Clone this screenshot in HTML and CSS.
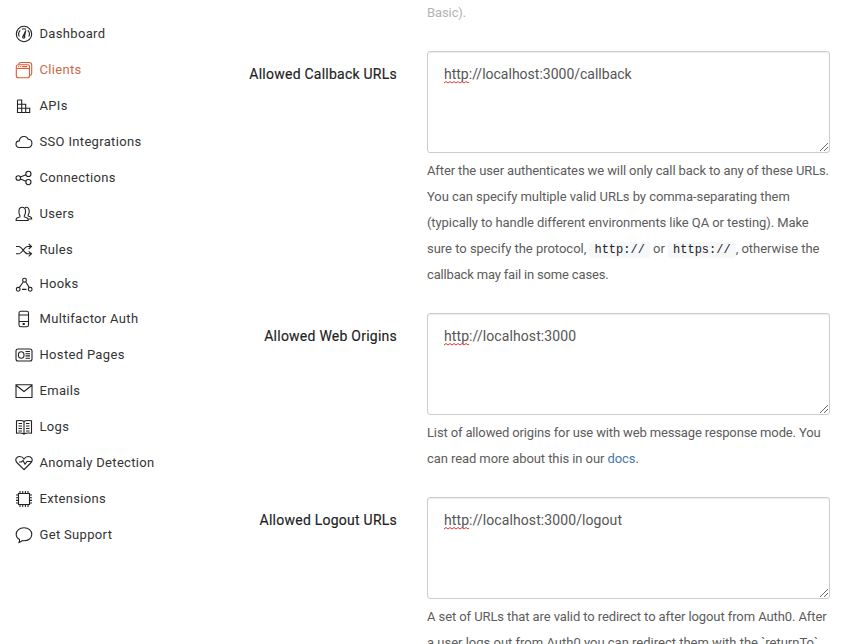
FILE: index.html
```html
<!DOCTYPE html>
<html lang="en">
<head>
<meta charset="utf-8">
<title>Client settings</title>
<link rel="stylesheet" href="styles.css">
</head>
<body>
<div class="page">
<nav class="sidebar">
<a class="item"><svg viewBox="0 0 18 18"><circle cx="9" cy="9" r="7.7"/><path d="M4.300 11.500a5.200 5.200 0 0 1 1-6.200M7 4.200a5 5 0 0 1 4 0M12.800 5.400a5.200 5.200 0 0 1 1 6.100M8.200 11 10.800 5.400 9.500 11.300"/><circle cx="8.7" cy="12" r="1.1"/></svg><span>Dashboard</span></a>
<a class="item active"><svg viewBox="0 0 18 18"><rect x="1.3" y="3.7" width="13.2" height="13" rx="2"/><path d="M1.500 7.500h13M3.200 5.600h1M5.200 5.600h1M7.200 5.600h5M3.600 3.500Q3.800 1.500 6 1.500h8.200q2.500 0 2.500 2.500v8.500q0 1.800-2 2"/></svg><span>Clients</span></a>
<a class="item"><svg viewBox="0 0 18 18"><path d="M2.500 3v12.500h12.200v-4.200H2.500M2.500 3h4.200v12.500M2.500 7.200h8.200v8.300"/></svg><span>APIs</span></a>
<a class="item"><svg viewBox="0 0 18 18"><path d="M4.500 14.500C2.200 14.500 1 13 1 11.200 1 9.200 2.300 8 4.300 7.900 4.600 5.200 6.500 3.500 9 3.500c2.200 0 3.500 1 4.200 2.800 2.200 0 3.700 1.700 3.700 4 0 2.500-1.600 4.200-4 4.200Z"/></svg><span>SSO Integrations</span></a>
<a class="item"><svg viewBox="0 0 18 18"><circle cx="3.3" cy="9" r="2.3"/><circle cx="13.4" cy="4.9" r="2.6"/><circle cx="13.4" cy="13.1" r="2.6"/><path d="M5.400 8.100 11 5.800M5.400 9.900 11 12.200"/></svg><span>Connections</span></a>
<a class="item"><svg viewBox="0 0 18 18"><path d="M1.100 15.500q-.2-2 1-2.500l2.800-1.100q.5-.7-.3-1.700Q3.700 8.500 4 5.500 4.300 2.300 7.200 2.300T10.500 5.500q.2 3-.8 4.700-.8 1-.3 1.700l2.800 1.100q1.200.5 1 2.500ZM10 2.500q3.500-1.200 4.200 3 .2 3-.8 4-.7.8-.1 1.600l2.300.9q1.300.5 1.100 2h-3"/></svg><span>Users</span></a>
<a class="item"><svg viewBox="0 0 18 18"><path d="M1 5.500h2.500C7.500 5.500 9 12.800 12.500 12.800H16M1 12.800h2.500C7.500 12.800 9 5.500 12.500 5.500H16M13.700 3l2.800 2.500L13.700 8M13.700 10.300l2.800 2.500-2.800 2.500"/></svg><span>Rules</span></a>
<a class="item hooks"><svg viewBox="0 0 18 18"><circle cx="9.500" cy="4.2" r="1.9"/><circle cx="3.2" cy="13.3" r="1.9"/><circle cx="15.2" cy="13.3" r="1.9"/><path d="m8.200 6-3.800 5.400M10.800 6l3.400 5.400M7 13.400h4.500"/></svg><span>Hooks</span></a>
<a class="item multi"><svg viewBox="0 0 18 18"><rect x="4" y="1.3" width="9.5" height="15.4" rx="1.8"/><path d="M4 5h9.500M4 11.500h9.500M8.200 13.500h1v1h-1z"/></svg><span>Multifactor Auth</span></a>
<a class="item"><svg viewBox="0 0 18 18"><rect x="1" y="3" width="16" height="12" rx="2"/><ellipse cx="6.2" cy="9" rx="2.8" ry="3.2"/><path d="M10.500 5.500H15M10.500 7.700H15M10.500 9.900H15M10.500 12.300H15"/></svg><span>Hosted Pages</span></a>
<a class="item"><svg viewBox="0 0 18 18"><path d="M1 2.800h16v12.700h-16ZM1 3.200 9 9.500l8-6.300"/></svg><span>Emails</span></a>
<a class="item"><svg viewBox="0 0 18 18"><path d="M9 3.500Q7.500 2 1.500 2.700v12.500q6-.5 7.500 1 1.500-1.500 7.500-1V2.700Q10.500 2 9 3.500v12.700M3.500 5.500H7M3.500 8H7M3.500 10.500H7M3.500 13H7M11 5.500h3.500M11 8h3.500M11 10.500h3.500M11 13h3.500"/></svg><span>Logs</span></a>
<a class="item"><svg viewBox="0 0 18 18"><path d="M9 15.700 2.300 9C-.8 5.800 1.500 2.500 4.700 2.500 6.700 2.500 8 3.500 9 5c1-1.500 2.300-2.500 4.300-2.500 3.200 0 5.500 3.300 2.400 6.500ZM4 8h2.500L8 6.500l2 3.800L12 7.500h4.500"/></svg><span>Anomaly Detection</span></a>
<a class="item"><svg viewBox="0 0 18 18"><path d="M3.500 3.500h11v11h-11ZM5 3.500V1M7.700 3.500V1M10.400 3.500V1M13 3.500V1M5 17v-2.500M7.700 17v-2.500M10.400 17v-2.500M13 17v-2.500M1 5h2.500M1 7.700h2.500M1 10.400h2.500M1 13h2.500M14.500 5H17M14.500 7.700H17M14.500 10.400H17M14.500 13H17"/></svg><span>Extensions</span></a>
<a class="item"><svg viewBox="0 0 18 18"><path d="M4.500 13.500C2.500 12.500 1.200 10.500 1.200 8.300 1.200 4.500 4.500 1.700 9 1.700s7.800 2.800 7.800 6.600-3.300 6.500-7.800 6.500q-1 0-1.800-.2Q5.800 16 4 16.500q.8-1.500.5-3Z"/></svg><span>Get Support</span></a>
</nav>
<main class="form">
<p class="help faded">Basic).</p>
<section class="row">
<label class="label callback">Allowed Callback URLs</label>
<div class="field">
<div class="area"><span class="misspelled">http<svg class="squiggle" viewBox="0 0 26 3"><path d="m0 2 2-1.500 2 1.500 2-1.500 2 1.500 2-1.500 2 1.500 2-1.500 2 1.500 2-1.500 2 1.500 2-1.500 2 1.500 1-.8"/></svg></span>://localhost:3000/callback<svg class="grip" viewBox="0 0 10 10"><path d="m1 9 8-8M5 9l4-4"/></svg></div>
<p class="help"><span class="l1">After the user authenticates we will only call back to any of these URLs.</span><br><span class="l2">You can specify multiple valid URLs by comma-separating them</span><br><span class="l3">(typically to handle different environments like QA or testing). Make</span><br><span class="l4">sure to specify the protocol, <code>http://</code> or <code>https://</code>, otherwise the</span><br><span class="l5">callback may fail in some cases.</span></p>
</div>
</section>
<section class="row">
<label class="label origins">Allowed Web Origins</label>
<div class="field">
<div class="area spaced"><span class="misspelled">http<svg class="squiggle" viewBox="0 0 26 3"><path d="m0 2 2-1.500 2 1.500 2-1.500 2 1.500 2-1.500 2 1.500 2-1.500 2 1.500 2-1.500 2 1.500 2-1.500 2 1.500 1-.8"/></svg></span>://localhost:3000<svg class="grip" viewBox="0 0 10 10"><path d="m1 9 8-8M5 9l4-4"/></svg></div>
<p class="help"><span class="l6">List of allowed origins for use with web message response mode. You</span><br><span class="l7">can read more about this in our <a class="link">docs</a>.</span></p>
</div>
</section>
<section class="row">
<label class="label logout">Allowed Logout URLs</label>
<div class="field">
<div class="area spaced"><span class="misspelled">http<svg class="squiggle" viewBox="0 0 26 3"><path d="m0 2 2-1.500 2 1.500 2-1.500 2 1.500 2-1.500 2 1.500 2-1.500 2 1.500 2-1.500 2 1.500 2-1.500 2 1.500 1-.8"/></svg></span>://localhost:3000/logout<svg class="grip" viewBox="0 0 10 10"><path d="m1 9 8-8M5 9l4-4"/></svg></div>
<p class="help"><span class="l8">A set of URLs that are valid to redirect to after logout from Auth0. After</span><br><span class="l9">a user logs out from Auth0 you can redirect them with the `returnTo`</span></p>
</div>
</section>
</main>
</div>
</body>
</html>
```
FILE: styles.css
```css
* { box-sizing: border-box; }
body { margin: 0; background: #fff; font-family: Roboto, "Liberation Sans", sans-serif; }
.page { display: flex; height: 644px; overflow: hidden; }
.sidebar { width: 240px; padding: 16px 0 0 14.500px; }
.item { display: flex; align-items: center; gap: 7px; height: 36px; color: #333; font-size: 13px; letter-spacing: .33px; white-space: nowrap; }
.item span { padding-bottom: 2px; }
.item svg { width: 18px; height: 18px; flex: none; fill: none; stroke: #222; stroke-width: 1.100; }
.item.active { color: #d0674b; }
.item.active svg { stroke: #dc5a35; }
.item.hooks { height: 33px; }
.item.multi { height: 36px; }
.form { flex: 1; padding-right: 25px; }
.help { margin: 5px 0 25px; font-size: 13px; line-height: 26px; color: #5c5c5c; white-space: nowrap; }
.help.faded { margin: 0 0 25px 187px; color: #b3b3b3; letter-spacing: -.1px; }
.row { display: grid; grid-template-columns: 157px 403px; column-gap: 30px; }
.label { padding-top: 13px; text-align: right; font-size: 14px; line-height: 20px; letter-spacing: .24px; font-weight: 400; color: #222; white-space: nowrap; -webkit-text-stroke: .15px #222; }
.area { position: relative; height: 102px; padding: 12px 16px; border: 1px solid #ccc; border-radius: 3px; box-shadow: inset 0 1px 1px rgba(0,0,0,.075); font-size: 14px; line-height: 20px; color: #555; }
.area.spaced { letter-spacing: .09px; }
.misspelled { position: relative; }
.squiggle { position: absolute; left: 0; top: 15px; width: 26px; height: 3px; fill: none; stroke: #e03c31; stroke-width: 1; }
.grip { position: absolute; right: 0; bottom: 0; width: 10px; height: 10px; fill: none; stroke: #555; stroke-width: .9; }
.l1 { letter-spacing: -.11px; }
.l2 { letter-spacing: -.05px; }
.l3 { letter-spacing: -.08px; }
.l4 { letter-spacing: -.02px; }
.l5 { letter-spacing: -.17px; }
.l6 { letter-spacing: -.14px; }
.l7 { letter-spacing: -.08px; }
.l8 { letter-spacing: -.09px; }
code { padding: 1px 5px; border-radius: 3px; background: #f5f7f9; color: #222; font-family: "Liberation Mono", monospace; font-size: 12px; line-height: 1; letter-spacing: 0; }
.link { color: #4779a8; }
```
